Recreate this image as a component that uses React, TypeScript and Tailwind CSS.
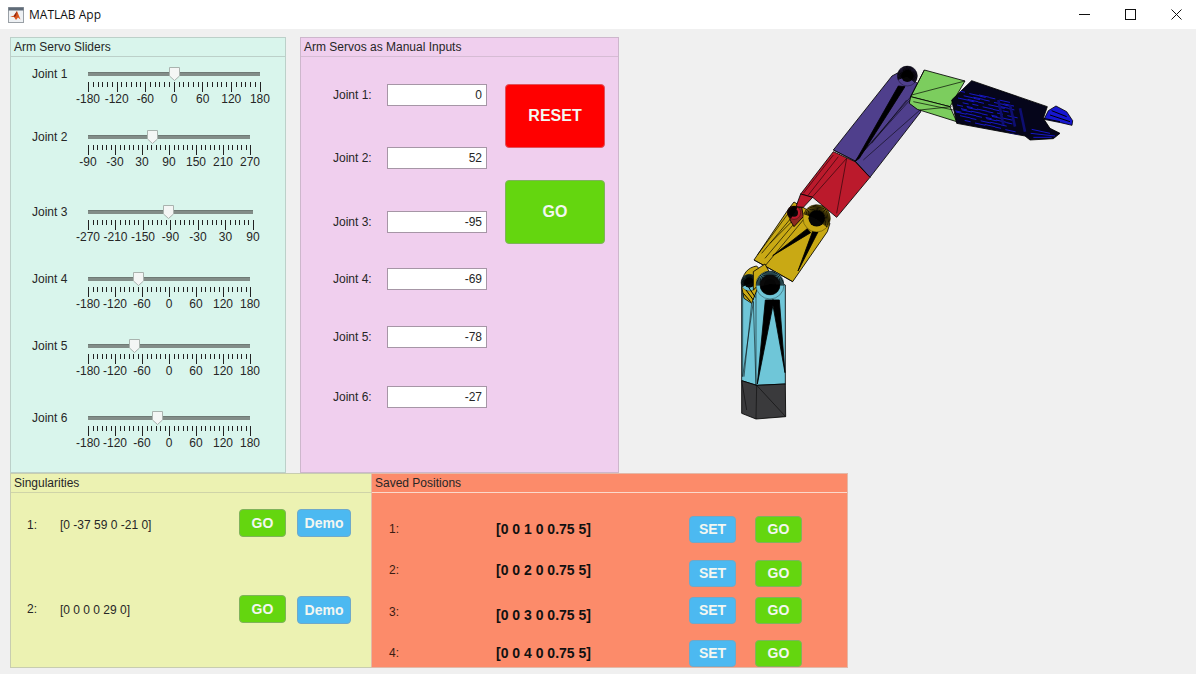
import React from "react";

const sliders = [
  { name: "Joint 1", min: -180, val: 0, w: 172, cls: "mt-[10px]", labels: ["-180", "-120", "-60", "0", "60", "120", "180"] },
  { name: "Joint 2", min: -90, val: 52, w: 162, cls: "mt-[24px]", labels: ["-90", "-30", "30", "90", "150", "210", "270"] },
  { name: "Joint 3", min: -270, val: -95, w: 165, cls: "mt-[36px]", labels: ["-270", "-210", "-150", "-90", "-30", "30", "90"] },
  { name: "Joint 4", min: -180, val: -69, w: 162, cls: "mt-[28px]", labels: ["-180", "-120", "-60", "0", "60", "120", "180"] },
  { name: "Joint 5", min: -180, val: -78, w: 162, cls: "mt-[28px]", labels: ["-180", "-120", "-60", "0", "60", "120", "180"] },
  { name: "Joint 6", min: -180, val: -27, w: 162, cls: "mt-[33px]", labels: ["-180", "-120", "-60", "0", "60", "120", "180"] },
];

const inputs = [
  { name: "Joint 1:", v: "0", cls: "mt-[27px]" },
  { name: "Joint 2:", v: "52", cls: "mt-[41px]" },
  { name: "Joint 3:", v: "-95", cls: "mt-[42px]" },
  { name: "Joint 4:", v: "-69", cls: "mt-[35px]" },
  { name: "Joint 5:", v: "-78", cls: "mt-[36px]" },
  { name: "Joint 6:", v: "-27", cls: "mt-[38px]" },
];

const saved = [
  { n: "1:", v: "[0 0 1 0 0.75 5]", row: "mt-[23px]", l: "mt-[6px]", t: "mt-[6px]" },
  { n: "2:", v: "[0 0 2 0 0.75 5]", row: "mt-[17px]", l: "mt-[3px]", t: "mt-[3px]" },
  { n: "3:", v: "[0 0 3 0 0.75 5]", row: "mt-[10px]", l: "mt-[8px]", t: "mt-[11px]" },
  { n: "4:", v: "[0 0 4 0 0.75 5]", row: "mt-[16px]", l: "mt-[6px]", t: "mt-[6px]" },
];

function Btn({ children, kind, cls }: { children: React.ReactNode; kind: string; cls: string }) {
  const c =
    kind === "red"
      ? "bg-[#ff0000] border-[#e0525c]"
      : kind === "blue"
      ? "bg-[#4cb9f1] border-[#6fa9c9]"
      : "bg-[#64d60f] border-[#7fb35a]";
  return (
    <div className={`flex items-center justify-center border rounded-[4px] font-bold text-[#f3f7f1] shrink-0 ${c} ${cls}`}>
      {children}
    </div>
  );
}

function Panel({ title, cls, line, children }: { title: string; cls: string; line: string; children: React.ReactNode }) {
  return (
    <div className={`border flex flex-col shrink-0 ${cls}`}>
      <div className={`h-[19px] border-b flex items-center pl-[3px] text-[12px] leading-[14px] text-[#262626] shrink-0 ${line}`}>{title}</div>
      <div className="flex-1 min-h-0">{children}</div>
    </div>
  );
}

function Slider({ s }: { s: (typeof sliders)[number] }) {
  const ticks = Array.from({ length: 37 }, (_, i) => i);
  const left = ((s.val - s.min) / 360) * s.w;
  return (
    <div className={`flex h-[39px] pl-[21px] ${s.cls}`}>
      <div className="w-[56px] h-[14px] text-[12px] leading-[14px] text-[#262626]">{s.name}</div>
      <div style={{ width: s.w }}>
        <div className="relative h-[14px] flex items-center">
          <div className="w-full h-[4px] bg-[#828d88] border-t border-[#6f7a75]" />
          <svg className="absolute top-0" style={{ left: Math.round(left) - 5 }} width="11" height="14" viewBox="0 0 11 14">
            <path d="M.5.5h10v8.5l-5 4.5-5-4.5z" fill="#f4f6f5" stroke="#a9b3ae" />
          </svg>
        </div>
        <div className="mt-[1px] h-[10px] flex justify-between items-start" style={{ width: s.w + 1 }}>
          {ticks.map((i) => (
            <div key={i} className={i % 6 === 0 ? "w-px h-[10px] bg-[#222222]" : "w-px h-[5px] bg-[#222222]"} />
          ))}
        </div>
        <div className="h-[14px] flex justify-between">
          {s.labels.map((l) => (
            <div key={l} className="w-0 flex justify-center text-[12px] leading-[14px] text-[#262626]">
              <span>{l}</span>
            </div>
          ))}
        </div>
      </div>
    </div>
  );
}

function Fan({ cx, cy, r, color, from, to }: { cx: number; cy: number; r: number; color: string; from: number; to: number }) {
  const spokes: number[] = [];
  for (let a = from; a <= to; a += 5) spokes.push(a);
  const rad = (a: number) => (a * Math.PI) / 180;
  return (
    <g>
      <circle cx={cx} cy={cy} r={r} fill={color} stroke="none" />
      <circle cx={cx} cy={cy} r={r * 0.6} fill="#060606" stroke="none" />
      {spokes.map((a) => (
        <line
          key={a}
          x1={cx}
          y1={cy}
          x2={cx + r * Math.cos(rad(a))}
          y2={cy + r * Math.sin(rad(a))}
          stroke="#000"
          strokeWidth="2.6"
        />
      ))}
      <circle cx={cx} cy={cy} r={r} fill="none" stroke="#000" strokeWidth="1" />
    </g>
  );
}

const stripes = Array.from({ length: 60 }, (_, i) => {
  const x = 795 + ((i * 37) % 165);
  const t = (i * 53) % 100;
  const y = 112 + (x - 795) * 0.28 + t * 0.95;
  return { x, y, len: 18 + ((i * 13) % 26) };
});

const armShape = "M785 150L845 92L1072 170L1060 205L1080 235L1110 250L1090 266L1020 270L1005 258L800 220Z";

function Robot() {
  return (
    <svg className="ml-[71px] mt-[13px] shrink-0" width="400" height="380" viewBox="690 50 400 380">
      <defs>
        <clipPath id="arm">
          <path d={armShape} />
        </clipPath>
      </defs>
      <g transform="translate(720 190) scale(0.33333)" stroke="#000" strokeWidth="2.5" strokeLinejoin="round">
        <path d="M65 290L110 250L196 285V582L110 586L65 572Z" fill="#6fc6d8" />
        <path d="M65 572L110 586L196 582L197 680L108 687L65 670Z" fill="#3a3a3c" />
        <path d="M110 586L108 687M110 586L197 680M65 572L80 660" fill="none" strokeWidth="1.5" />
        <path d="M136 330L162 330L112 582Z" fill="#000" />
        <path d="M156 330L178 330L195 548Z" fill="#000" />
        <path d="M68 300L68 560L100 335ZM100 335L108 586M108 300V586M72 560L95 340" fill="none" strokeWidth="1.6" />
        <path d="M65 290C65 250 85 232 110 228L130 250L95 340L72 325Z" fill="#c9a914" />
        <Fan cx={88} cy={278} r={25} color="#6fc6d8" from={150} to={360} />
        <path d="M78 300L100 330M86 292L106 322M70 310L92 335" stroke="#000" strokeWidth="3" fill="none" />
        <path d="M102 210L205 58L222 36L262 60L330 100L322 125L218 275L135 228Z" fill="#c9a914" />
        <path d="M102 210L135 228L218 275M135 228L262 75M112 195L205 70M125 190L215 82M150 160L225 85M135 205L240 80" fill="none" strokeWidth="2" />
        <path d="M158 197L262 116L272 128Z" fill="#000" />
        <path d="M234 243L280 118L294 126Z" fill="#000" />
        <path d="M100 245L135 222L150 250L100 300Z" fill="#c9a914" />
        <path d="M208 62L245 50L250 80L222 110L210 90Z" fill="#8c2a20" />
        <Fan cx={150} cy={285} r={42} color="#6fc6d8" from={180} to={360} />
        <Fan cx={150} cy={285} r={30} color="#0a0a0a" from={0} to={170} />
        <Fan cx={290} cy={85} r={41} color="#c9a914" from={200} to={400} />
      </g>
      <g transform="translate(690 50) scale(0.33333)" stroke="#000" strokeWidth="2.5" strokeLinejoin="round">
        <path d="M430 300L606 78L640 60L692 110L692 186L540 382L495 333Z" fill="#4f3f8c" />
        <path d="M430 300L495 333L540 382M495 333L680 120M520 330L690 180M545 280L650 150M495 333L660 150" fill="none" strokeWidth="1.6" />
        <path d="M497 333L625 108L645 110L508 325Z" fill="#000" />
        <path d="M430 305L495 335L540 382L440 502L368 442L332 432Z" fill="#bb1a2c" />
        <path d="M470 325L440 490M470 325L368 440M430 315L340 430M445 320L355 435" fill="none" strokeWidth="1.6" />
        <path d="M332 432L368 442L340 472L318 470Z" fill="#bb1a2c" />
        <Fan cx={312} cy={488} r={20} color="#bb1a2c" from={120} to={300} />
        <Fan cx={652} cy={78} r={30} color="#4f3f8c" from={160} to={400} />
        <path d="M703 60L825 93L780 170L662 140Z" fill="#7ccd5e" />
        <path d="M662 140L780 170L800 215L682 178L658 160Z" fill="#7ccd5e" />
        <path d="M665 135L825 93M670 155L790 180M690 180L785 170M662 140L703 60" fill="none" strokeWidth="2" />
        <path d={armShape} fill="#05051a" />
        <g clipPath="url(#arm)">
          {stripes.map((s, i) => (
            <line key={i} x1={s.x} y1={s.y} x2={s.x + s.len} y2={s.y + s.len * 0.22} stroke="#1717c8" strokeWidth="3" />
          ))}
          <path d="M925 150L940 225M960 165L975 230M990 175L1005 245" fill="none" stroke="#0e0e70" strokeWidth="8" />
          <path d="M1025 238L1080 250M1022 250L1095 258M1030 262L1085 262" fill="none" stroke="#1717c8" strokeWidth="3" />
        </g>
        <path d="M1075 182L1098 168L1130 185L1148 212L1146 226L1112 218L1062 208Z" fill="#1616d0" />
        <path d="M1080 195L1140 215M1085 182L1130 200M1060 205L1110 215" fill="none" stroke="#000" strokeWidth="3" />
      </g>
    </svg>
  );
}

export default function App() {
  return (
    <div className="w-[1196px] h-[674px] bg-[#f0f0f0] overflow-hidden flex flex-col font-['Liberation_Sans',sans-serif]">
      <div className="h-[29px] bg-white flex items-center shrink-0 pl-[8px] pr-[14px]">
        <svg width="16" height="16" viewBox="0 0 16 16">
          <rect x=".5" y=".5" width="15" height="15" fill="#eef1f4" stroke="#9aa0a6" />
          <rect x=".5" y=".5" width="15" height="3" fill="#5f6b78" />
          <path d="M2 10L6 8.5L9 4L12.5 12.5L10 10.5L8 13L6 10Z" fill="#d9541e" />
          <path d="M6 8.5L9 4L8 9L6 10Z" fill="#8e2a14" />
        </svg>
        <div className="ml-[5px] text-[12px] leading-[16px] text-[#111111] font-['Open_Sans',sans-serif]">MATLAB App</div>
        <div className="ml-auto flex items-center gap-[35px]">
          <svg width="11" height="11" viewBox="0 0 11 11"><path d="M0 5.5H11" stroke="#111" /></svg>
          <svg width="11" height="11" viewBox="0 0 11 11"><rect x=".5" y=".5" width="10" height="10" fill="none" stroke="#111" /></svg>
          <svg width="11" height="11" viewBox="0 0 11 11"><path d="M.5.5L10.5 10.5M10.5.5L.5 10.5" stroke="#111" /></svg>
        </div>
      </div>
      <div className="pl-[10px] pt-[8px] flex flex-col">
        <div className="flex h-[436px]">
          <Panel title="Arm Servo Sliders" cls="w-[276px] bg-[#d9f5ec] border-[#bcd0c9]" line="border-[#bcd0c9]">
            {sliders.map((s) => (
              <Slider key={s.name} s={s} />
            ))}
          </Panel>
          <Panel title="Arm Servos as Manual Inputs" cls="ml-[14px] w-[319px] bg-[#f0cfee] border-[#cdb7cc]" line="border-[#d6bcd4]">
            <div className="flex">
              <div className="pl-[32px] w-[204px]">
                {inputs.map((r) => (
                  <div key={r.name} className={`flex items-center h-[22px] ${r.cls}`}>
                    <div className="w-[54px] text-[12px] leading-[14px] text-[#262626]">{r.name}</div>
                    <div className="w-[100px] h-full bg-white border border-[#a696a6] text-right pr-[4px] text-[12px] leading-[20px] text-[#262626]">{r.v}</div>
                  </div>
                ))}
              </div>
              <div className="pt-[27px] flex flex-col gap-[32px]">
                <Btn kind="red" cls="w-[100px] h-[64px] text-[16px]">RESET</Btn>
                <Btn kind="green" cls="w-[100px] h-[64px] text-[16px]">GO</Btn>
              </div>
            </div>
          </Panel>
          <Robot />
        </div>
        <div className="flex h-[195px]">
          <Panel title="Singularities" cls="w-[361px] bg-[#ecf2b2] border-[#c8cdb0] border-r-0" line="border-[#cfd4a8]">
            <div className="flex pl-[16px] pt-[16px] h-[102px]">
              <div className="w-[33px] mt-[9px] h-[14px] text-[12px] leading-[14px] text-[#262626]">1:</div>
              <div className="w-[179px] mt-[9px] h-[14px] text-[12px] leading-[14px] text-[#262626]">[0 -37 59 0 -21 0]</div>
              <Btn kind="green" cls="w-[47px] h-[28px] text-[14px]">GO</Btn>
              <Btn kind="blue" cls="ml-[11px] w-[54px] h-[28px] text-[14px]">Demo</Btn>
            </div>
            <div className="flex pl-[16px] h-[40px]">
              <div className="w-[33px] mt-[7px] h-[14px] text-[12px] leading-[14px] text-[#262626]">2:</div>
              <div className="w-[179px] mt-[8px] h-[14px] text-[12px] leading-[14px] text-[#262626]">[0 0 0 0 29 0]</div>
              <Btn kind="green" cls="w-[47px] h-[28px] text-[14px]">GO</Btn>
              <Btn kind="blue" cls="ml-[11px] mt-[1px] w-[54px] h-[28px] text-[14px]">Demo</Btn>
            </div>
          </Panel>
          <Panel title="Saved Positions" cls="w-[477px] bg-[#fc8b6a] border-[#e3b9a8]" line="border-[#fbd9cb]">
            {saved.map((r) => (
              <div key={r.n} className={`flex h-[27px] pl-[17px] ${r.row}`}>
                <div className={`w-[107px] h-[14px] text-[12px] leading-[14px] text-[#3a1c12] ${r.l}`}>{r.n}</div>
                <div className="w-[193px]">
                  <div className={`h-[14px] text-[14px] leading-[14px] font-bold text-[#111111] ${r.t}`}>{r.v}</div>
                </div>
                <Btn kind="blue" cls="w-[47px] h-[27px] text-[14px]">SET</Btn>
                <Btn kind="green" cls="ml-[19px] w-[47px] h-[27px] text-[14px]">GO</Btn>
              </div>
            ))}
          </Panel>
        </div>
      </div>
    </div>
  );
}
